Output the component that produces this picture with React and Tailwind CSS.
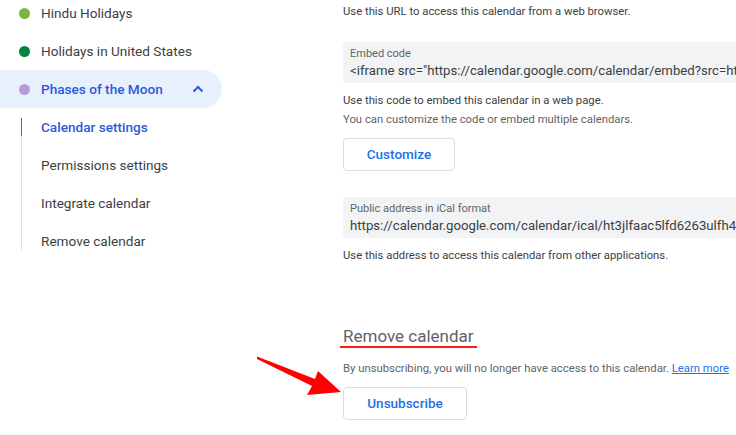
import React from "react";

const font = { fontFamily: "Roboto, 'Noto Sans', Arial, sans-serif" };

function Dot({ color }) {
  return <span className="w-[11px] h-[11px] rounded-full shrink-0" style={{ backgroundColor: color }} />;
}

function CalRow({ color, label, active }) {
  return (
    <div
      className={
        "h-[38px] flex items-center pl-[19px] pr-[12px] w-[222px] " +
        (active ? "bg-[#e8f0fe] rounded-r-full text-[#2a5bd7] font-medium" : "text-[#3c4043]")
      }
    >
      <Dot color={color} />
      <span className="ml-[11px] text-[13.6px] flex-1">{label}</span>
      {active && (
        <svg width="12" height="8" viewBox="0 0 12 8" className="mr-[6px]">
          <path d="M1.5 6.5 L6 2 L10.5 6.5" fill="none" stroke="#2a5bd7" strokeWidth="2" />
        </svg>
      )}
    </div>
  );
}

function SubItem({ label, active }) {
  return (
    <div
      className={
        "h-[38px] flex items-center pl-[19px] text-[13.6px] " +
        (active ? "text-[#2a5bd7] font-medium" : "text-[#3c4043]")
      }
    >
      {label}
    </div>
  );
}

function CodeBox({ label, value }) {
  return (
    <div className="h-[41px] bg-[#f1f3f4] rounded-[4px] pl-[7px] pt-[5px] w-[420px] overflow-hidden whitespace-nowrap">
      <div className="text-[11px] leading-[14px] text-[#5f6368]">{label}</div>
      <div className="text-[13.2px] leading-[19px] text-[#3c4043]">{value}</div>
    </div>
  );
}

function OutlineButton({ label, w }) {
  return (
    <button
      className={
        "border border-[#dadce0] rounded-[4px] text-[13.5px] font-medium text-[#1a73e8] bg-white flex items-center justify-center " +
        w
      }
    >
      {label}
    </button>
  );
}

export default function App() {
  return (
    <div className="relative w-[736px] h-[435px] overflow-hidden bg-white" style={font}>
      <div className="flex">
        {/* sidebar */}
        <div className="w-[343px] shrink-0 -mt-[6px]">
          <CalRow color="#7cb342" label="Hindu Holidays" />
          <CalRow color="#0b8043" label="Holidays in United States" />
          <CalRow color="#b39ddb" label="Phases of the Moon" active />
          <div className="flex ml-[21px]">
            <div className="w-px flex flex-col">
              <div className="h-[10px]" />
              <div className="h-[18px] bg-[#1a73e8]" />
              <div className="flex-1 bg-[#e0e0e0]" />
              <div className="h-[10px]" />
            </div>
            <div className="flex flex-col">
              <SubItem label="Calendar settings" active />
              <SubItem label="Permissions settings" />
              <SubItem label="Integrate calendar" />
              <SubItem label="Remove calendar" />
            </div>
          </div>
        </div>

        {/* main */}
        <div className="flex-1 min-w-0 flex flex-col items-start">
          <p className="mt-[4px] text-[11.3px] leading-[16px] text-[#3c4043]">
            Use this URL to access this calendar from a web browser.
          </p>
          <div className="mt-[22px]">
            <CodeBox
              label="Embed code"
              value={'<iframe src="https://calendar.google.com/calendar/embed?src=ht3jlfaac5lfd6263ulfh4'}
            />
          </div>
          <p className="mt-[10px] text-[11.3px] leading-[16px] text-[#3c4043]">
            Use this code to embed this calendar in a web page.
          </p>
          <p className="mt-[3px] text-[11.3px] leading-[16px] text-[#5f6368]">
            You can customize the code or embed multiple calendars.
          </p>
          <div className="mt-[10px]">
            <OutlineButton label="Customize" w="w-[112px] h-[33px]" />
          </div>
          <div className="mt-[26px]">
            <CodeBox
              label="Public address in iCal format"
              value="https://calendar.google.com/calendar/ical/ht3jlfaac5lfd6263ulfh4dvd%40group.calendar"
            />
          </div>
          <p className="mt-[10px] text-[11.3px] leading-[16px] text-[#3c4043]">
            Use this address to access this calendar from other applications.
          </p>
          <h2 className="mt-[63px] -ml-[3px] px-[3px] border-b-2 border-[#ff1a1a] text-[17px] leading-[19px] text-[#5f6368] font-normal">
            Remove calendar
          </h2>
          <p className="mt-[13px] text-[11.3px] leading-[16px] text-[#5f6368] whitespace-nowrap">
            By unsubscribing, you will no longer have access to this calendar.{" "}
            <a className="text-[#1a73e8] underline">Learn more</a>
          </p>
          <div className="mt-[10px]">
            <OutlineButton label="Unsubscribe" w="w-[124px] h-[33px]" />
          </div>
        </div>
      </div>

      {/* annotation arrow */}
      <svg className="absolute left-0 top-0 pointer-events-none" width="736" height="435">
        <polygon
          points="257,356.5 315,379 318,371 341,392 307,395 312,386 257,359"
          fill="#ff0000"
        />
      </svg>
    </div>
  );
}
